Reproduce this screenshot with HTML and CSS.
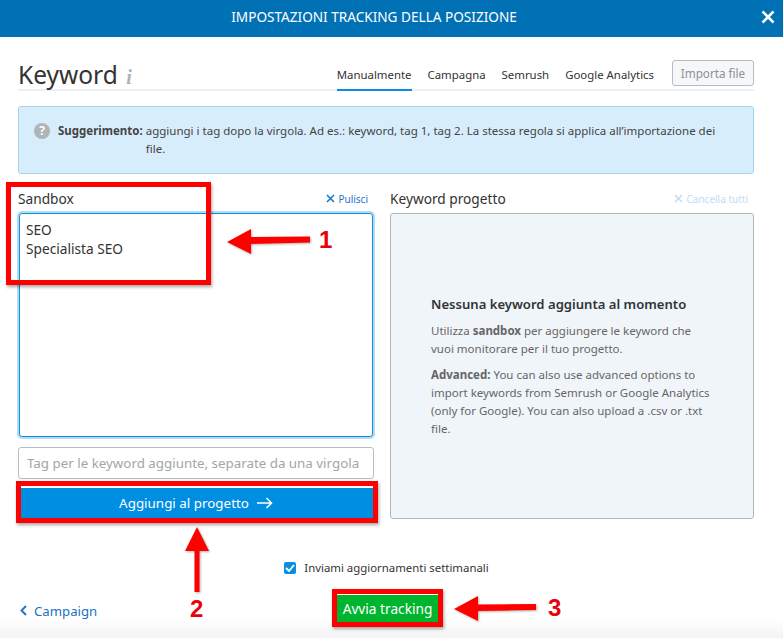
FILE: index.html
```html
<!DOCTYPE html>
<html lang="it">
<head>
    <meta charset="UTF-8">
    <title>Impostazioni tracking della posizione</title>
    <link rel="stylesheet" href="styles.css">
</head>
<body>
    <div class="modal">
        <header class="modal-header">
            <span>IMPOSTAZIONI TRACKING DELLA POSIZIONE</span>
            <svg class="close" width="14" height="14" viewBox="0 0 14 14"><path d="M1.5 1.5l11 11M12.5 1.5l-11 11" stroke="#fff" stroke-width="2.6" fill="none"/></svg>
        </header>

        <main class="content">
            <div class="title-row">
                <h1>Keyword <i class="info">i</i></h1>
                <nav class="tabs">
                    <a class="tab active">Manualmente</a>
                    <a class="tab">Campagna</a>
                    <a class="tab">Semrush</a>
                    <a class="tab">Google Analytics</a>
                </nav>
                <button class="import">Importa file</button>
            </div>

            <div class="hint">
                <span class="hint-icon">?</span>
                <b>Suggerimento:</b>
                <p>aggiungi i tag dopo la virgola. Ad es.: keyword, tag 1, tag 2. La stessa regola si applica all’importazione dei file.</p>
            </div>

            <div class="columns">
                <section class="col">
                    <div class="col-head">
                        <h2>Sandbox</h2>
                        <a class="clear"><svg width="9" height="9" viewBox="0 0 9 9"><path d="M1 1l7 7M8 1l-7 7" stroke="currentColor" stroke-width="1.6" fill="none"/></svg>Pulisci</a>
                    </div>
                    <div class="sandbox">SEO<br>Specialista SEO</div>
                    <div class="tag-input">Tag per le keyword aggiunte, separate da una virgola</div>
                    <button class="add">Aggiungi al progetto
                        <svg width="16" height="12" viewBox="0 0 16 12"><path d="M0 6h14.5M9.5 1l5 5-5 5" stroke="#fff" stroke-width="1.6" fill="none"/></svg>
                    </button>
                </section>
                <section class="col">
                    <div class="col-head">
                        <h2>Keyword progetto</h2>
                        <a class="clear disabled"><svg width="9" height="9" viewBox="0 0 9 9"><path d="M1 1l7 7M8 1l-7 7" stroke="currentColor" stroke-width="1.6" fill="none"/></svg>Cancella tutti</a>
                    </div>
                    <div class="empty">
                        <h3>Nessuna keyword aggiunta al momento</h3>
                        <p>Utilizza <b>sandbox</b> per aggiungere le keyword che vuoi monitorare per il tuo progetto.</p>
                        <p><b>Advanced:</b> You can also use advanced options to import keywords from Semrush or Google Analytics (only for Google). You can also upload a .csv or .txt file.</p>
                    </div>
                </section>
            </div>

            <label class="weekly">
                <span class="check"><svg width="10" height="8" viewBox="0 0 10 8"><path d="M1 4l3 3 5-6" stroke="#fff" stroke-width="1.8" fill="none"/></svg></span>
                Inviami aggiornamenti settimanali
            </label>
        </main>

        <footer class="modal-footer">
            <a class="back"><svg width="7" height="11" viewBox="0 0 7 11"><path d="M6 1L1.5 5.5 6 10" stroke="currentColor" stroke-width="1.8" fill="none"/></svg>Campaign</a>
            <button class="start">Avvia tracking</button>
        </footer>
    </div>

    <!-- red notes drawn on top of the screenshot -->
    <div class="note-box box-1"></div>
    <div class="note-box box-2"></div>
    <div class="note-box box-3"></div>
    <svg class="arrows" width="783" height="638" viewBox="0 0 783 638">
        <path d="M227 242L251 229V237L310 236.500V242.500L251 244V254Z"/>
        <path d="M197 527L209 551H199.500V592H194.500V551H185Z"/>
        <path d="M454 609L478 596V604.500L536 604V610L478 611V621Z"/>
    </svg>
    <span class="note-num num-1">1</span>
    <span class="note-num num-2">2</span>
    <span class="note-num num-3">3</span>
</body>
</html>
```

FILE: styles.css
```css
* {
    box-sizing: border-box;
    margin: 0;
    padding: 0;
}
body {
    width: 783px;
    height: 638px;
    overflow: hidden;
    position: relative;
    background: #fff;
    font-family: "Noto Sans", sans-serif;
    color: #333;
}
.modal {
    height: 638px;
    display: flex;
    flex-direction: column;
}
.modal-header {
    height: 37px;
    padding: 0 35px 4px 0;
    background: #0071b5;
    color: #fff;
    font-size: 13.600px;
    display: flex;
    align-items: center;
    justify-content: center;
    position: relative;
}
.close {
    position: absolute;
    right: 8px;
    top: 10px;
}
.content {
    flex: 1;
    padding: 0 29px 0 18px;
}
.title-row {
    height: 54px;
    padding-top: 19px;
    display: flex;
    align-items: flex-end;
    border-bottom: 2px solid #eef0f2;
}
h1 {
    font-size: 24.500px;
    font-weight: 400;
    line-height: 34px;
    height: 31px;
    flex: 1;
}
.info {
    font-family: "Liberation Serif", serif;
    font-weight: 700;
    font-size: 20px;
    color: #aab3b8;
    margin-left: 2px;
}
.tabs {
    display: flex;
    gap: 16px;
    margin-right: 18px;
}
.tab {
    font-size: 11.400px;
    line-height: 16px;
    padding: 6px 0 6px;
    margin-bottom: -2px;
    border-bottom: 2px solid transparent;
}
.tab.active {
    border-bottom-color: #0a8fe0;
}
.import {
    width: 82px;
    height: 26px;
    margin-bottom: 3px;
    font-family: inherit;
    font-size: 11.700px;
    color: #8c9296;
    background: #f6f7f8;
    border: 1px solid #b4bec4;
    border-radius: 3px;
}
.hint {
    margin-top: 15px;
    height: 68px;
    background: #d8edfc;
    border: 1px solid #a5d4f3;
    border-radius: 3px;
    padding: 15px 30px 0 15px;
    display: flex;
    font-size: 11.500px;
    line-height: 18px;
    color: #444;
}
.hint-icon {
    width: 16px;
    height: 16px;
    flex: none;
    margin: 1px 8px 0 0;
    border-radius: 50%;
    background: #aeb4b8;
    color: #fff;
    font-weight: 700;
    font-size: 12px;
    line-height: 16px;
    text-align: center;
}
.hint b {
    flex: none;
    margin-right: 3px;
}
.columns {
    display: flex;
    gap: 16px;
    margin-top: 15px;
}
.col {
    flex: 1;
    display: flex;
    flex-direction: column;
}
.col:first-child {
    flex: none;
    width: 356px;
}
.col-head {
    height: 24px;
    padding-bottom: 5px;
    display: flex;
    justify-content: space-between;
    align-items: center;
}
h2 {
    font-size: 13.700px;
    font-weight: 400;
}
.clear {
    font-size: 10px;
    color: #1a78c8;
    display: flex;
    align-items: center;
    gap: 3px;
    padding-right: 6px;
}
.clear.disabled {
    color: #c2dcf2;
}
.sandbox {
    height: 224px;
    margin: 0 1px;
    padding: 6px 6px;
    font-size: 13.700px;
    line-height: 19px;
    border: 1px solid #0a8fe0;
    border-radius: 3px;
    box-shadow: 0 0 0 2px #b5dcf7;
}
.tag-input {
    height: 32px;
    margin: 10px 0 9px;
    padding: 0 8px;
    font-size: 13.350px;
    line-height: 30px;
    color: #a2a6a8;
    white-space: nowrap;
    border: 1px solid #b4bec4;
    border-radius: 3px;
}
.add {
    height: 31px;
    padding-bottom: 2px;
    border: 0;
    background: #008ee3;
    color: #fff;
    font-family: inherit;
    font-size: 13.400px;
    display: flex;
    align-items: center;
    justify-content: center;
    gap: 8px;
}
.empty {
    height: 306px;
    background: #f0f5fa;
    border: 1px solid #adb8bd;
    border-radius: 3px;
    padding: 81px 40px 0 40px;
    font-size: 11.500px;
    line-height: 18px;
    color: #666;
}
.empty h3 {
    font-size: 13.100px;
    line-height: 18px;
    font-weight: 600;
    color: #333;
    margin-bottom: 9px;
}
.empty p {
    margin-bottom: 8px;
}
.weekly {
    margin-top: 40px;
    display: flex;
    justify-content: center;
    align-items: center;
    gap: 8px;
    font-size: 11.400px;
    line-height: 18px;
    padding-left: 1px;
}
.check {
    width: 12px;
    height: 12px;
    background: #0a8fe0;
    border-radius: 2px;
    display: flex;
    align-items: center;
    justify-content: center;
}
.modal-footer {
    height: 43px;
    padding: 0 0 12px 20px;
    position: relative;
    display: flex;
    align-items: center;
    background: linear-gradient(#fff 55%, #f3f3f3);
}
.back {
    font-size: 13.200px;
    color: #1a72bd;
    display: flex;
    align-items: center;
    gap: 7px;
}
.start {
    width: 101px;
    height: 28px;
    padding-bottom: 2px;
    position: absolute;
    left: 337px;
    top: 0;
    border: 0;
    background: #00b52e;
    color: #fff;
    font-family: inherit;
    font-size: 13.700px;
}
/* annotations */
.note-box {
    position: absolute;
    border: 5px solid #f00;
    box-shadow: 1px 2px 3px rgba(0, 0, 0, 0.35);
}
.box-1 {
    left: 6px;
    top: 182px;
    width: 205px;
    height: 103px;
}
.box-2 {
    left: 16px;
    top: 481px;
    width: 362px;
    height: 42px;
}
.box-3 {
    left: 332px;
    top: 589px;
    width: 111px;
    height: 38px;
}
.arrows {
    position: absolute;
    left: 0;
    top: 0;
    fill: #f00;
    filter: drop-shadow(1px 1px 1px rgba(0, 0, 0, 0.3));
}
.note-num {
    position: absolute;
    font-family: "Liberation Sans", sans-serif;
    font-weight: 700;
    font-size: 24px;
    line-height: 24px;
    color: #e8000b;
}
.num-1 {
    left: 319px;
    top: 228px;
}
.num-2 {
    left: 190px;
    top: 597px;
}
.num-3 {
    left: 548px;
    top: 596px;
}
```
